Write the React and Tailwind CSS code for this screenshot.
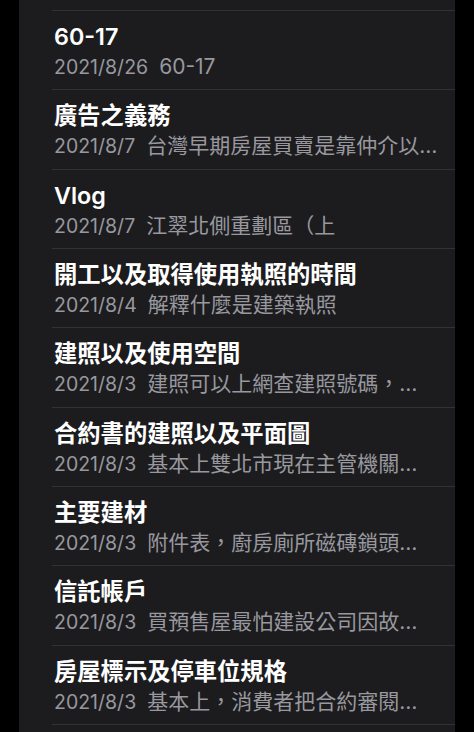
const notes = [
  { title: "60-17", date: "2021/8/26", preview: "60-17" },
  { title: "廣告之義務", date: "2021/8/7", preview: "台灣早期房屋買賣是靠仲介以…" },
  { title: "Vlog", date: "2021/8/7", preview: "江翠北側重劃區（上" },
  { title: "開工以及取得使用執照的時間", date: "2021/8/4", preview: "解釋什麼是建築執照" },
  { title: "建照以及使用空間", date: "2021/8/3", preview: "建照可以上網查建照號碼，…" },
  { title: "合約書的建照以及平面圖", date: "2021/8/3", preview: "基本上雙北市現在主管機關…" },
  { title: "主要建材", date: "2021/8/3", preview: "附件表，廚房廁所磁磚鎖頭…" },
  { title: "信託帳戶", date: "2021/8/3", preview: "買預售屋最怕建設公司因故…" },
  { title: "房屋標示及停車位規格", date: "2021/8/3", preview: "基本上，消費者把合約審閱…" },
];

const font = {
  fontFamily: '"Inter", "Noto Sans CJK TC", "Noto Sans", sans-serif',
};

export default function App() {
  return (
    <div className="w-[474px] h-[732px] bg-black overflow-hidden" style={font}>
      <div className="mx-[19px] h-full bg-[#1c1c1e] pt-[10px]">
        {notes.map((note, i) => (
          <div
            key={i}
            className="ml-[33px] h-[79.33px] border-t border-[#323235] pt-[11px] pl-[2px] pr-[6px]"
          >
            <div className="text-[23.3px] leading-[30px] font-semibold text-white truncate">
              {note.title}
            </div>
            <div className="text-[21px] leading-[30px] text-[#98989e] truncate whitespace-nowrap">
              <span className="text-[19.5px] mr-[11px]">{note.date}</span>
              {note.preview}
            </div>
          </div>
        ))}
        <div className="ml-[33px] border-t border-[#323235]" />
      </div>
    </div>
  );
}
